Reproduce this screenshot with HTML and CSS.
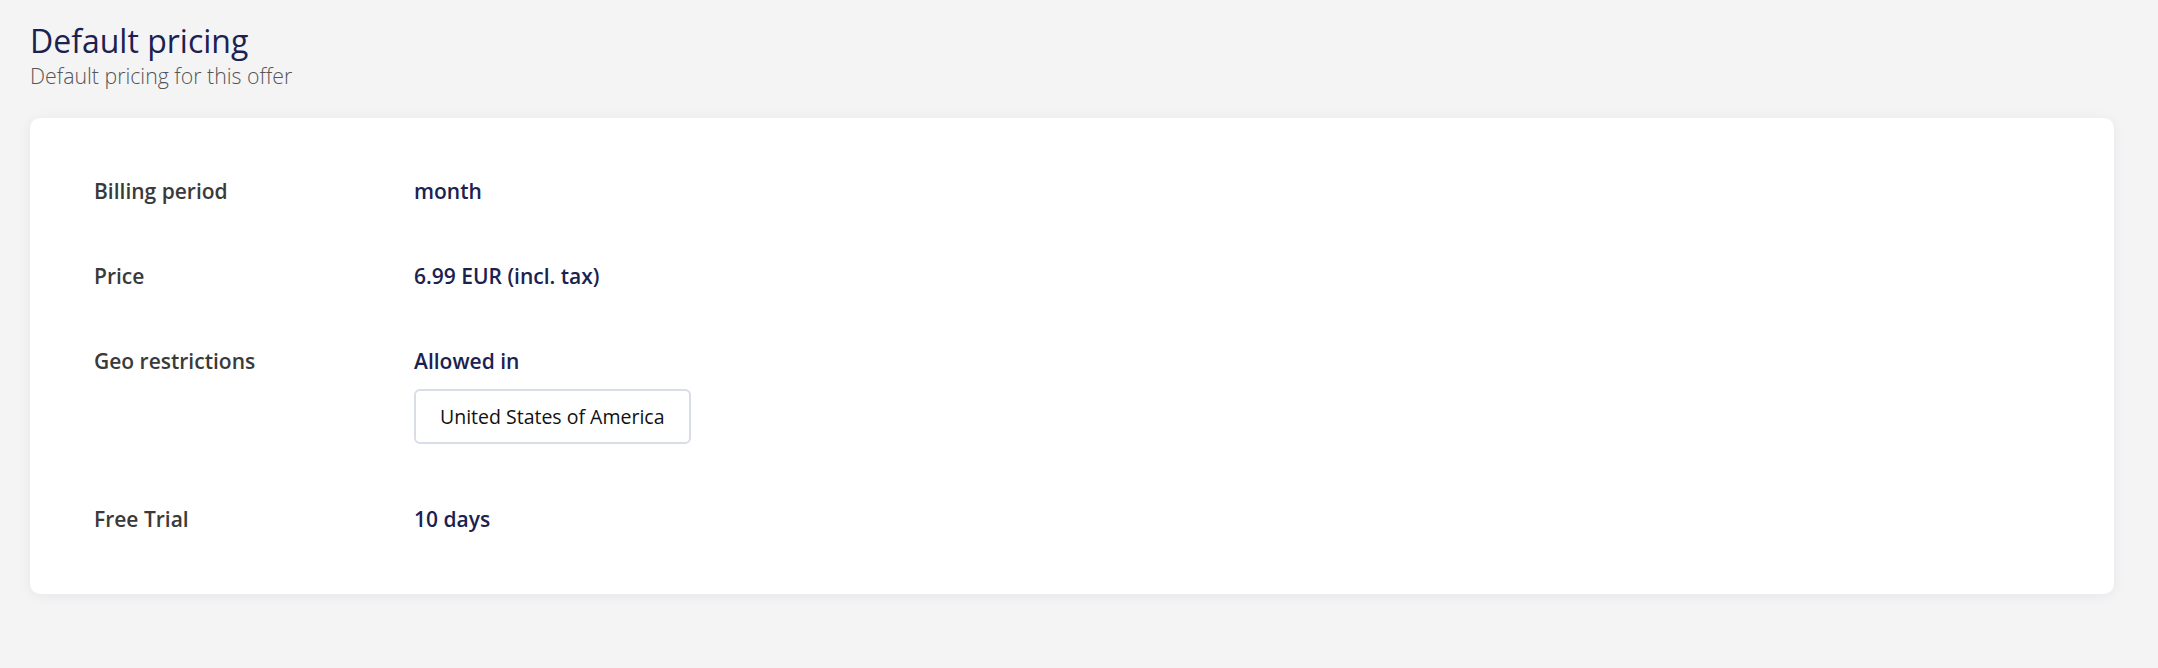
FILE: index.html
```html
<!DOCTYPE html>
<html lang="en">
<head>
    <meta charset="UTF-8">
    <meta name="viewport" content="width=device-width, initial-scale=1.0">
    <title>Default pricing</title>
    <link rel="stylesheet" href="styles.css">
</head>
<body>
    <header class="page-header">
        <h1>Default pricing</h1>
        <p class="subtitle">Default pricing for this offer</p>
    </header>

    <section class="card">
        <div class="row">
            <span class="label">Billing period</span>
            <div class="value">month</div>
        </div>
        <div class="row">
            <span class="label">Price</span>
            <div class="value">6.99 EUR (incl. tax)</div>
        </div>
        <div class="row">
            <span class="label">Geo restrictions</span>
            <div class="value">
                <div>Allowed in</div>
                <div class="chips">
                    <span class="chip">United States of America</span>
                </div>
            </div>
        </div>
        <div class="row">
            <span class="label">Free Trial</span>
            <div class="value">10 days</div>
        </div>
    </section>
</body>
</html>
```

FILE: styles.css
```css
body {
    font-family: 'Open Sans', 'Noto Sans', sans-serif;
    background-color: #f4f4f5;
    color: #333;
    margin: 0;
    padding: 21px 44px 40px 30px;
}

.page-header h1 {
    margin: 0;
    font-size: 32px;
    line-height: 40px;
    font-weight: 400;
    color: #1b2251;
}

.subtitle {
    margin: 1px 0 0;
    font-size: 21.3px;
    line-height: 28px;
    font-weight: 300;
    color: #555;
}

.card {
    margin-top: 28px;
    background-color: #fff;
    border-radius: 10px;
    box-shadow: 0 2px 14px rgba(20, 24, 60, 0.06);
    padding: 59px 64px 61px;
    display: flex;
    flex-direction: column;
    gap: 57px;
}

.row {
    display: grid;
    grid-template-columns: 320px 1fr;
    font-size: 21px;
    line-height: 28px;
    font-weight: 600;
}

.label {
    color: #3a3a3a;
}

.value {
    color: #1b2251;
}

.chips {
    display: flex;
    gap: 10px;
    margin-top: 14px;
    margin-bottom: 4px;
}

.chip {
    border: 2px solid #d8dde8;
    border-radius: 6px;
    padding: 11px 24px;
    font-size: 19.5px;
    line-height: 29px;
    font-weight: 400;
    color: #111;
}
```
